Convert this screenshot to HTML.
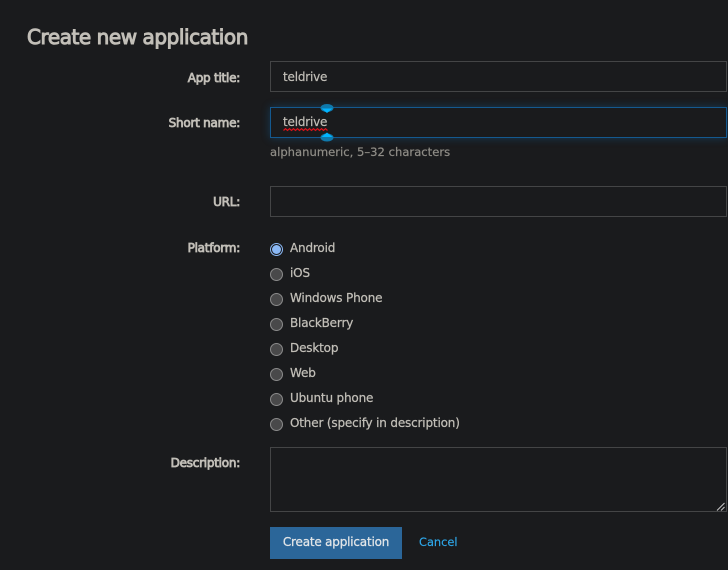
<!DOCTYPE html>
<html><head><meta charset="utf-8"><style>
html,body{margin:0;padding:0;background:#1a1b1d;width:728px;height:570px;overflow:hidden}
body{position:relative;font-family:"DejaVu Sans","Liberation Sans",sans-serif;font-size:12px;color:#c2bfb8}
.a{position:absolute;white-space:nowrap;line-height:14px}
h1{position:absolute;left:27px;top:24px;margin:0;font-size:20px;line-height:26px;font-weight:normal;-webkit-text-stroke:1px #c2bfb8;color:#c2bfb8;white-space:nowrap;letter-spacing:-.45px}
.l{position:absolute;right:488px;font-weight:normal;-webkit-text-stroke:.8px #c2bfb8;font-size:12px;line-height:14px;color:#c2bfb8;white-space:nowrap;letter-spacing:-.25px}
.i{position:absolute;left:270px;width:455px;border:1px solid #444546;box-sizing:content-box}
.t{position:absolute;left:283px;font-size:12px;line-height:14px;color:#c2bfb8;white-space:nowrap;letter-spacing:-.2px;-webkit-text-stroke:.2px #c2bfb8}
.r{position:absolute;left:270px;width:11px;height:11px;border:1px solid #8b8b8b;border-radius:50%;background:#49494a}
.o{position:absolute;left:290px;font-size:12px;line-height:14px;color:#c2bfb8;white-space:nowrap;letter-spacing:-.17px;-webkit-text-stroke:.25px #c2bfb8}
</style></head><body>
<h1>Create new application</h1>

<div class="l" style="top:71px">App title:</div>
<div class="i" style="top:61px;height:29px"></div>
<div class="t" style="top:70px">teldrive</div>

<div class="l" style="top:116px">Short name:</div>
<div class="i" style="top:107px;height:29px;border-color:#14598f;box-shadow:0 0 8px rgba(20,100,160,.45)"></div>
<div class="t" style="top:115px">teldrive</div>
<svg class="a" style="left:270px;top:100px" width="70" height="45" viewBox="0 0 70 45">
<path d="M13.5 30.5 l2-1.8 2 1.8 2-1.8 2 1.8 2-1.8 2 1.8 2-1.8 2 1.8 2-1.8 2 1.8 2-1.8 2 1.8 2-1.8 2 1.8 2-1.8 2 1.8 2-1.8 2 1.8 2-1.8 2 1.8 2-1.8 2 1.8" fill="none" stroke="#dd121a" stroke-width="1.2"/>
<ellipse cx="57" cy="8" rx="6.5" ry="4" fill="#0f79ac"/>
<path d="M51.5 8.5h11l-5.5 4.5z" fill="#00b4ff"/>
<ellipse cx="57" cy="37.5" rx="6.5" ry="4" fill="#0f79ac"/>
<path d="M51.5 37h11l-5.5-4.5z" fill="#00b4ff"/>
</svg>
<div class="a" style="left:270px;top:145px;color:#8f8d87;font-size:11.6px;-webkit-text-stroke:.2px #8f8d87">alphanumeric, 5–32 characters</div>

<div class="l" style="top:195px">URL:</div>
<div class="i" style="top:186px;height:29px"></div>

<div class="l" style="top:241px">Platform:</div>
<div class="r" style="top:243px;background:#8ab8f5;border:1px solid #8ab8f5;width:11px;height:11px"></div>
<div class="a" style="left:272px;top:245px;width:9px;height:9px;border-radius:50%;background:#8ab8f5;box-shadow:0 0 0 1px #1a1b1d"></div>
<div class="o" style="top:241px">Android</div>
<div class="r" style="top:268px"></div><div class="o" style="top:266px">iOS</div>
<div class="r" style="top:293px"></div><div class="o" style="top:291px">Windows Phone</div>
<div class="r" style="top:318px"></div><div class="o" style="top:316px">BlackBerry</div>
<div class="r" style="top:343px"></div><div class="o" style="top:341px">Desktop</div>
<div class="r" style="top:368px"></div><div class="o" style="top:366px">Web</div>
<div class="r" style="top:393px"></div><div class="o" style="top:391px">Ubuntu phone</div>
<div class="r" style="top:418px"></div><div class="o" style="top:416px">Other (specify in description)</div>

<div class="l" style="top:456px">Description:</div>
<div class="i" style="top:447px;height:63px"></div>
<svg class="a" style="left:716px;top:502px" width="10" height="9"><path d="M1 8.5L8.5 1M5 8.5L8.5 5" stroke="#c8c8c8" stroke-width="1" fill="none"/></svg>

<div class="a" style="left:270px;top:527px;width:132px;height:32px;background:#2b6699;color:#e3e6e8;text-align:center;line-height:30px;font-size:12px;letter-spacing:-.2px;-webkit-text-stroke:.25px #e3e6e8">Create application</div>
<div class="a" style="left:419px;top:535px;color:#2ea8ea;font-size:11.4px;-webkit-text-stroke:.15px #2ea8ea">Cancel</div>
</body></html>
